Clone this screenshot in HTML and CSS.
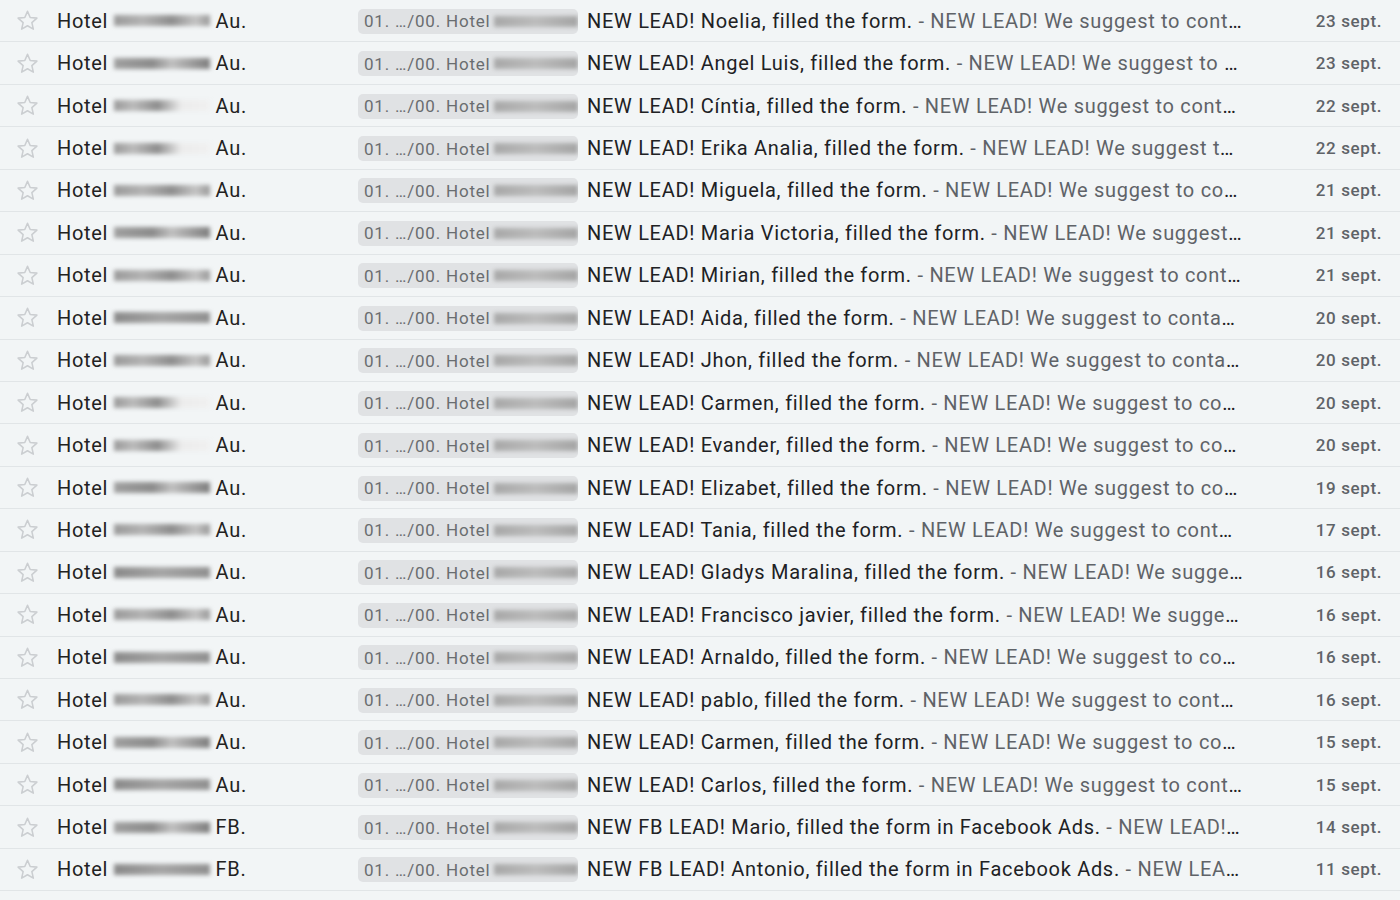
FILE: index.html
```html
<!DOCTYPE html>
<html lang="en">
<head>
    <meta charset="UTF-8">
    <title>Inbox</title>
    <link rel="stylesheet" href="styles.css">
</head>
<body>
    <div id="inbox" class="list"></div>

    <script>
        // sender suffix, blur variant, subject, snippet, date
        const mails = [
            ['Au.', 1, 'NEW LEAD! Noelia, filled the form.', 'NEW LEAD! We suggest to contact the customer as soon as possible', '23 sept.'],
            ['Au.', 2, 'NEW LEAD! Angel Luis, filled the form.', 'NEW LEAD! We suggest to contact the customer as soon as possible', '23 sept.'],
            ['Au.', 3, 'NEW LEAD! Cíntia, filled the form.', 'NEW LEAD! We suggest to contact the customer as soon as possible', '22 sept.'],
            ['Au.', 3, 'NEW LEAD! Erika Analia, filled the form.', 'NEW LEAD! We suggest to contact the customer as soon as possible', '22 sept.'],
            ['Au.', 1, 'NEW LEAD! Miguela, filled the form.', 'NEW LEAD! We suggest to contact the customer as soon as possible', '21 sept.'],
            ['Au.', 2, 'NEW LEAD! Maria Victoria, filled the form.', 'NEW LEAD! We suggest to contact the customer as soon as possible', '21 sept.'],
            ['Au.', 1, 'NEW LEAD! Mirian, filled the form.', 'NEW LEAD! We suggest to contact the customer as soon as possible', '21 sept.'],
            ['Au.', 4, 'NEW LEAD! Aida, filled the form.', 'NEW LEAD! We suggest to contact the customer as soon as possible', '20 sept.'],
            ['Au.', 1, 'NEW LEAD! Jhon, filled the form.', 'NEW LEAD! We suggest to contact the customer as soon as possible', '20 sept.'],
            ['Au.', 3, 'NEW LEAD! Carmen, filled the form.', 'NEW LEAD! We suggest to contact the customer as soon as possible', '20 sept.'],
            ['Au.', 3, 'NEW LEAD! Evander, filled the form.', 'NEW LEAD! We suggest to contact the customer as soon as possible', '20 sept.'],
            ['Au.', 2, 'NEW LEAD! Elizabet, filled the form.', 'NEW LEAD! We suggest to contact the customer as soon as possible', '19 sept.'],
            ['Au.', 1, 'NEW LEAD! Tania, filled the form.', 'NEW LEAD! We suggest to contact the customer as soon as possible', '17 sept.'],
            ['Au.', 4, 'NEW LEAD! Gladys Maralina, filled the form.', 'NEW LEAD! We suggest to contact the customer as soon as possible', '16 sept.'],
            ['Au.', 1, 'NEW LEAD! Francisco javier, filled the form.', 'NEW LEAD! We suggest to contact the customer as soon as possible', '16 sept.'],
            ['Au.', 4, 'NEW LEAD! Arnaldo, filled the form.', 'NEW LEAD! We suggest to contact the customer as soon as possible', '16 sept.'],
            ['Au.', 1, 'NEW LEAD! pablo, filled the form.', 'NEW LEAD! We suggest to contact the customer as soon as possible', '16 sept.'],
            ['Au.', 2, 'NEW LEAD! Carmen, filled the form.', 'NEW LEAD! We suggest to contact the customer as soon as possible', '15 sept.'],
            ['Au.', 4, 'NEW LEAD! Carlos, filled the form.', 'NEW LEAD! We suggest to contact the customer as soon as possible', '15 sept.'],
            ['FB.', 2, 'NEW FB LEAD! Mario, filled the form in Facebook Ads.', 'NEW LEAD! We suggest to contact the customer as soon as possible', '14 sept.'],
            ['FB.', 4, 'NEW FB LEAD! Antonio, filled the form in Facebook Ads.', 'NEW LEAD! We suggest to contact the customer as soon as possible', '11 sept.']
        ];

        const star = '<svg viewBox="0 0 24 24" width="25" height="25"><path d="M12 3.2l2.6 5.9 6.4.6-4.8 4.3 1.4 6.3L12 17l-5.6 3.3 1.4-6.3L3 9.7l6.4-.6z" fill="none" stroke="#cbced1" stroke-width="1.5" stroke-linejoin="round"/></svg>';

        const list = document.getElementById('inbox');
        mails.forEach(m => {
            const row = document.createElement('div');
            row.className = 'row';
            row.innerHTML =
                `<div class="star">${star}</div>` +
                `<div class="sender">Hotel <span class="blur b${m[1]}"></span> ${m[0]}</div>` +
                `<div class="label"><span>01. …/00. Hotel</span><span class="blur chip-blur"></span></div>` +
                `<div class="subject"><span class="title">${m[2]}</span><span class="snippet"> - ${m[3]}</span></div>` +
                `<div class="date">${m[4]}</div>`;
            list.appendChild(row);
        });
    </script>
</body>
</html>
```

FILE: styles.css
```css
body {
    margin: 0;
    background-color: #f2f5f6;
    font-family: Roboto, "Noto Sans", Arial, sans-serif;
    color: #202124;
}
.list {
    width: 1400px;
}
.row {
    display: flex;
    align-items: center;
    height: 42.45px;
    box-sizing: border-box;
    border-bottom: 1.5px solid #e1e5e7;
    overflow: hidden;
}
.star {
    width: 57px;
    display: flex;
    justify-content: center;
    padding-right: 3px;
    box-sizing: border-box;
}
.star svg {
    display: block;
}
.sender {
    width: 301px;
    display: flex;
    align-items: center;
    font-size: 20px;
    letter-spacing: 0.7px;
    color: #222;
    white-space: pre;
}
.blur {
    display: inline-block;
    height: 11px;
    filter: blur(2px);
}
.b1 {
    width: 96px;
    background: linear-gradient(90deg, #9a9a9a 0%, #b4b4b4 30%, #8e8e8e 60%, #c4c4c4 85%, #999 100%);
}
.b2 {
    width: 96px;
    background: linear-gradient(90deg, #a0a0a0 0%, #8c8c8c 40%, #c0c0c0 60%, #7e7e7e 100%);
}
.b3 {
    width: 96px;
    background: linear-gradient(90deg, #999 0%, #bbb 20%, #8e8e8e 45%, #ececec 70%, #f0f0f0 100%);
}
.b4 {
    width: 96px;
    background: linear-gradient(90deg, #8a8a8a 0%, #a6a6a6 50%, #909090 100%);
}
.label {
    width: 220px;
    height: 25px;
    margin-top: 1px;
    margin-right: 9px;
    padding-left: 6px;
    box-sizing: border-box;
    display: flex;
    align-items: center;
    gap: 3px;
    border-radius: 5px;
    background-color: #e0e2e4;
    color: #6a6d70;
    font-size: 17px;
    letter-spacing: 0.8px;
    white-space: nowrap;
    overflow: hidden;
}
.chip-blur {
    flex: 1;
    height: 11px;
    background: linear-gradient(90deg, #a8a8a8 0%, #bcbcbc 50%, #a4a4a4 100%);
}
.subject {
    width: 656px;
    font-size: 20px;
    letter-spacing: 0.7px;
    white-space: nowrap;
    overflow: hidden;
    text-overflow: ellipsis;
}
.title {
    color: #202124;
}
.snippet {
    color: #5f6368;
}
.date {
    flex: 1;
    text-align: right;
    padding-right: 18px;
    font-size: 17px;
    font-weight: 500;
    letter-spacing: 0.6px;
    color: #5f6368;
}
```
